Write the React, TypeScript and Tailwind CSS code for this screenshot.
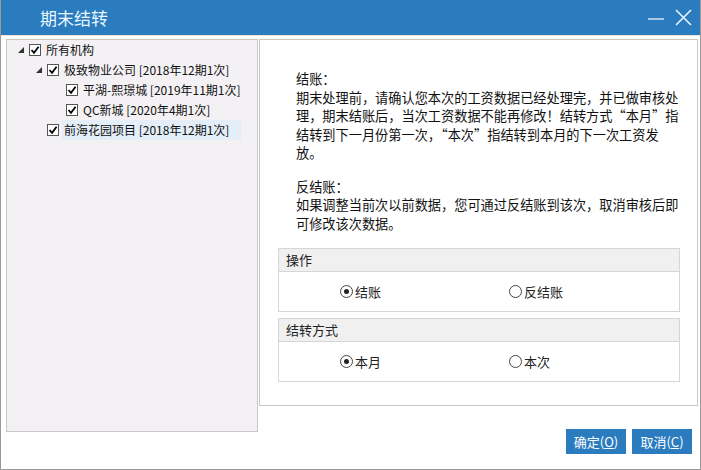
import React from 'react'

const Check: React.FC = () => (
  <span className="w-[12px] h-[12px] border border-[#555] bg-white flex items-center justify-center shrink-0">
    <svg width="10" height="10" viewBox="0 0 10 10">
      <path d="M1.5 5 L4 7.8 L8.6 1.8" fill="none" stroke="#000" strokeWidth="1.8" />
    </svg>
  </span>
)

const Arrow: React.FC = () => (
  <svg width="7" height="7" viewBox="0 0 7 7" className="shrink-0">
    <polygon points="6,0 6,6 0,6" fill="#333" />
  </svg>
)

const Radio: React.FC<{ on?: boolean; label: string }> = ({ on, label }) => (
  <div className="flex items-center gap-[2px]">
    <span className="w-[13px] h-[13px] rounded-full border border-[#444] flex items-center justify-center">
      {on && <span className="w-[5px] h-[5px] rounded-full bg-[#222]" />}
    </span>
    <span>{label}</span>
  </div>
)

const Group: React.FC<{ title: string; a: string; b: string }> = ({ title, a, b }) => (
  <div className="border border-[#d6d6d6] w-[402px]">
    <div className="h-[23px] bg-[#f0f0f0] border-b border-[#d6d6d6] flex items-center pl-[7px] text-[13px] text-[#222]">
      {title}
    </div>
    <div className="h-[39px] flex items-center text-[13px] text-[#222]">
      <div className="w-[230px] pl-[61px]">
        <Radio on label={a} />
      </div>
      <Radio label={b} />
    </div>
  </div>
)

const App: React.FC = () => {
  const font = { fontFamily: '"Microsoft YaHei", "Noto Sans CJK SC", sans-serif' }
  return (
    <div className="w-[701px] h-[470px] bg-white border-x border-b border-[#9a9a9a] flex flex-col overflow-hidden" style={font}>
      <div className="h-[35px] bg-[#2a7cbf] flex items-center pl-[39px] pr-[8px] shrink-0">
        <span className="text-[17px] text-[#e8f6ff]">期末结转</span>
        <div className="ml-auto flex items-center gap-[11px]">
          <svg width="16" height="16" viewBox="0 0 16 16">
            <line x1="0" y1="9" x2="16" y2="9" stroke="#e8f4ff" strokeWidth="1.3" />
          </svg>
          <svg width="17" height="17" viewBox="0 0 17 17">
            <path d="M1 1 L16 16 M16 1 L1 16" stroke="#e8f4ff" strokeWidth="1.6" />
          </svg>
        </div>
      </div>
      <div className="h-[1px] bg-[#efe3da]" />
      <div className="flex pl-[5px] pt-[3px] gap-[1px]">
        <div className="w-[252px] h-[393px] border border-[#c8c8c8] bg-[#f4f1f5] text-[12px] text-[#111]">
          <div className="h-[20px] flex items-center pl-[11px]">
            <Arrow />
            <span className="ml-[4px]"><Check /></span>
            <span className="ml-[5px]">所有机构</span>
          </div>
          <div className="h-[20px] flex items-center pl-[29px]">
            <Arrow />
            <span className="ml-[4px]"><Check /></span>
            <span className="ml-[5px]">极致物业公司 [2018年12期1次]</span>
          </div>
          <div className="h-[20px] flex items-center pl-[59px]">
            <Check />
            <span className="ml-[5px]">平湖-熙璟城 [2019年11期1次]</span>
          </div>
          <div className="h-[20px] flex items-center pl-[59px]">
            <Check />
            <span className="ml-[5px]">QC新城 [2020年4期1次]</span>
          </div>
          <div className="h-[20px] flex items-center pl-[40px]">
            <Check />
            <span className="ml-[3px] pl-[2px] pr-[12px] h-[20px] flex items-center bg-[#e3eef8]">前海花园项目 [2018年12期1次]</span>
          </div>
        </div>
        <div className="flex-1 flex flex-col">
          <div className="h-[367px] border border-[#c8c8c8] mr-[2px] pt-[30px] pl-[18px]">
            <div className="text-[13.2px] leading-[18.5px] text-[#111] pl-[18px]">
              <div>结账：</div>
              <div>期末处理前，请确认您本次的工资数据已经处理完，并已做审核处</div>
              <div>理，期末结账后，当次工资数据不能再修改！结转方式“本月”指</div>
              <div>结转到下一月份第一次，“本次”指结转到本月的下一次工资发</div>
              <div>放。</div>
              <div className="h-[15px]" />
              <div>反结账：</div>
              <div>如果调整当前次以前数据，您可通过反结账到该次，取消审核后即</div>
              <div>可修改该次数据。</div>
            </div>
            <div className="mt-[15px] flex flex-col gap-[6px]">
              <Group title="操作" a="结账" b="反结账" />
              <Group title="结转方式" a="本月" b="本次" />
            </div>
          </div>
          <div className="flex justify-end gap-[6px] pr-[8px] pt-[23px]">
            <button className="w-[60px] h-[25px] bg-[#2a7cbf] text-white text-[13px]">
              确定(<span className="underline">O</span>)
            </button>
            <button className="w-[60px] h-[25px] bg-[#2a7cbf] text-white text-[13px]">
              取消(<span className="underline">C</span>)
            </button>
          </div>
        </div>
      </div>
    </div>
  )
}

export default App
